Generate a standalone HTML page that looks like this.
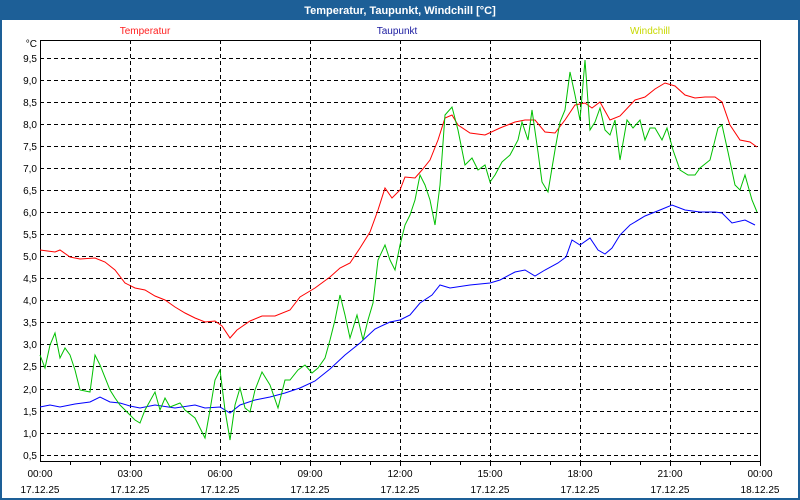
<!DOCTYPE html>
<html><head><meta charset="utf-8"><style>
html,body{margin:0;padding:0;width:800px;height:500px;overflow:hidden;background:#fff}
svg{display:block}
text{font-family:"Liberation Sans",sans-serif;font-size:10px}
</style></head><body>
<svg width="800" height="500" xmlns="http://www.w3.org/2000/svg">
<rect x="0" y="0" width="800" height="500" fill="#1d5f97"/>
<rect x="2" y="20" width="796" height="478" fill="#fff"/>
<text x="400" y="14" fill="#fff" font-weight="bold" text-anchor="middle" style="font-size:11px">Temperatur, Taupunkt, Windchill [°C]</text>
<text x="145" y="34" fill="#ff2020" text-anchor="middle">Temperatur</text>
<text x="397" y="34" fill="#1a1aa0" text-anchor="middle">Taupunkt</text>
<text x="650" y="34" fill="#c8d800" text-anchor="middle">Windchill</text>
<g stroke="#000" stroke-width="1" stroke-dasharray="4,3" fill="none">
<path d="M40 58.5H760M40 80.5H760M40 102.5H760M40 124.5H760M40 146.5H760M40 168.5H760M40 190.5H760M40 212.5H760M40 234.5H760M40 256.5H760M40 278.5H760M40 300.5H760M40 322.5H760M40 344.5H760M40 366.5H760M40 389.5H760M40 411.5H760M40 433.5H760M40 455.5H760"/>
<path d="M130.5 40V461M220.5 40V461M310.5 40V461M400.5 40V461M490.5 40V461M580.5 40V461M670.5 40V461"/>
</g>
<path d="M40.5 40V461.5H760.5V40M40 40.5H760" stroke="#000" fill="none"/>
<path d="M70.5 461v4M100.5 461v4M130.5 461v5M160.5 461v4M190.5 461v4M220.5 461v5M250.5 461v4M280.5 461v4M310.5 461v5M340.5 461v4M370.5 461v4M400.5 461v5M430.5 461v4M460.5 461v4M490.5 461v5M520.5 461v4M550.5 461v4M580.5 461v5M610.5 461v4M640.5 461v4M670.5 461v5M700.5 461v4M730.5 461v4M760.5 461v5" stroke="#000"/>
<g fill="#000" text-anchor="end">
<text x="37" y="47">°C</text>
<text x="37" y="62">9,5</text><text x="37" y="84">9,0</text><text x="37" y="106">8,5</text><text x="37" y="128">8,0</text><text x="37" y="150">7,5</text><text x="37" y="172">7,0</text><text x="37" y="194">6,5</text><text x="37" y="216">6,0</text><text x="37" y="238">5,5</text><text x="37" y="260">5,0</text><text x="37" y="282">4,5</text><text x="37" y="304">4,0</text><text x="37" y="326">3,5</text><text x="37" y="348">3,0</text><text x="37" y="370">2,5</text><text x="37" y="393">2,0</text><text x="37" y="415">1,5</text><text x="37" y="437">1,0</text><text x="37" y="459">0,5</text>
</g>
<g fill="#000" text-anchor="middle">
<text x="40" y="477">00:00</text><text x="130" y="477">03:00</text><text x="220" y="477">06:00</text><text x="310" y="477">09:00</text><text x="400" y="477">12:00</text><text x="490" y="477">15:00</text><text x="580" y="477">18:00</text><text x="670" y="477">21:00</text><text x="760" y="477">00:00</text>
<text x="40" y="493">17.12.25</text><text x="130" y="493">17.12.25</text><text x="220" y="493">17.12.25</text><text x="310" y="493">17.12.25</text><text x="400" y="493">17.12.25</text><text x="490" y="493">17.12.25</text><text x="580" y="493">17.12.25</text><text x="670" y="493">17.12.25</text><text x="760" y="493">18.12.25</text>
</g>
<polyline fill="none" stroke="#ff0000" points="40,250 55,252 60,250 70,257 80,259 95,258 105,262 115,270 125,283 135,288 145,290 155,296 165,300 175,307 185,313 195,318 205,322 215,321 222,326 230,338 237,330 250,321 262,316 275,316 290,310 300,297 315,288 330,277 340,268 350,263 360,248 370,232 378,210 385,188 392,198 400,190 405,177 415,178 422,170 430,160 438,140 445,118 452,115 458,125 470,133 485,135 500,128 515,122 525,120 535,120 545,132 555,133 565,120 575,105 585,103 592,108 600,102 610,120 620,116 635,100 645,97 655,89 665,83 675,86 685,95 695,98 705,97 715,97 722,102 730,125 740,140 750,142 757,147"/>
<polyline fill="none" stroke="#0000ff" points="40,407 50,405 60,407 75,404 90,402 100,397 110,402 120,403 130,406 140,408 155,405 175,408 195,405 205,408 220,407 230,413 240,405 255,400 270,397 285,393 300,388 315,381 330,369 345,355 360,343 375,329 390,322 400,320 410,315 420,303 432,295 440,285 450,288 470,285 490,283 500,280 515,272 525,270 535,276 545,270 558,263 566,257 572,240 580,245 590,238 598,250 605,254 612,248 620,235 630,225 645,216 660,210 672,205 685,210 700,212 715,212 722,213 732,223 745,220 755,225"/>
<polyline fill="none" stroke="#00c000" points="40,355 45,368 50,345 55,333 60,358 65,348 70,355 75,370 80,390 90,392 95,355 100,365 110,390 115,398 120,405 125,410 130,415 135,420 140,423 145,410 155,392 160,410 165,398 170,407 180,403 185,410 195,418 205,438 210,410 215,380 220,370 225,410 230,440 235,405 240,388 245,408 250,412 255,390 262,372 270,385 278,408 285,380 290,380 298,370 305,365 312,373 318,368 325,358 330,340 335,320 340,295 345,315 350,338 357,315 363,340 368,320 373,303 378,260 385,245 390,260 395,270 400,245 405,225 410,215 415,200 420,175 425,185 430,200 435,225 440,185 445,115 452,107 458,130 465,165 472,158 478,170 485,165 490,182 495,175 502,162 510,155 518,140 522,122 528,140 532,110 538,152 542,182 548,192 555,150 560,122 565,110 570,72 575,95 580,120 585,60 590,130 595,122 600,108 605,130 610,135 615,120 620,160 627,120 633,128 640,120 645,140 650,128 655,128 662,140 667,128 673,150 680,170 688,175 695,175 700,168 710,160 718,128 722,125 728,152 735,185 740,190 745,175 752,200 757,212"/>
</svg>
</body></html>
